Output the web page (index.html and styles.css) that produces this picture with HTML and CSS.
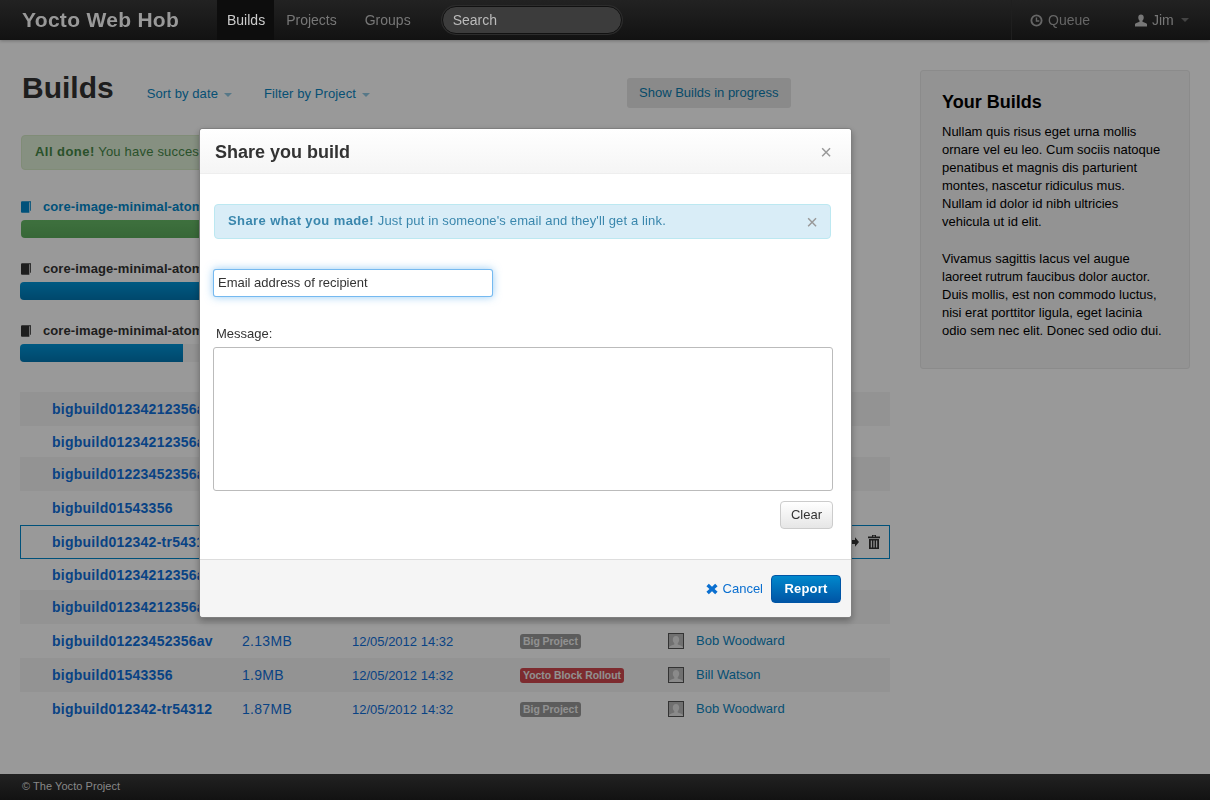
FILE: index.html
```html
<!DOCTYPE html>
<html lang="en">

<head>
    <meta charset="UTF-8">
    <title>Yocto Web Hob</title>
    <link rel="stylesheet" href="styles.css">
</head>

<body>
    <svg class="icon-defs" width="0" height="0">
        <symbol id="i-book" viewBox="0 0 12 14"><path d="M2.5 0H12v11.5h-1V1.2H3V0zM0 1.5C0 .7.7.2 1.5.2H10v13.8H1.6C.7 14 0 13.4 0 12.6z"/></symbol>
        <symbol id="i-user" viewBox="0 0 14 14"><path d="M7 0c2 0 3.2 1.5 3.2 3.6 0 1.6-.7 3-1.5 3.7v1.3c1.800.7 4.300 1.300 5.300 2.500V14H0v-2.900c1-1.200 3.500-1.800 5.300-2.500V7.300C4.500 6.600 3.800 5.200 3.800 3.600 3.800 1.500 5 0 7 0z"/></symbol>
        <symbol id="i-clock" viewBox="0 0 14 14"><path fill-rule="evenodd" d="M7 .5a6.500 6.500 0 1 1 0 13 6.500 6.500 0 0 1 0-13zm0 2a4.500 4.500 0 1 0 0 9 4.500 4.500 0 0 0 0-9zM6.200 3.800h1.500v3h2.300v1.500H6.200z"/></symbol>
        <symbol id="i-remove" viewBox="0 0 14 14"><path d="M3.300 1 7 4.500 10.700 1 13.500 3.800 10 7l3.500 3.300-2.800 2.700L7 9.500 3.300 13 .5 10.300 4 7 .5 3.800z"/></symbol>
        <symbol id="i-trash" viewBox="0 0 12 14"><path fill-rule="evenodd" d="M4 0h4v1.500h4v1.700H0V1.500h4zM5 .8v.7h2V.8zM1 4h10v10H1zm1.800 1.500v7h1.100v-7zm2.600 0v7h1.200v-7zm2.700 0v7h1.100v-7z"/></symbol>
        <symbol id="i-share" viewBox="0 0 10 12"><path d="M5 0l5 6-5 6V8.500H0v-5h5z"/></symbol>
    </svg>

    <!-- barra superior -->
    <header class="navbar">
        <a class="brand" href="#">Yocto Web Hob</a>
        <nav class="nav-links">
            <a class="nav-link active" href="#">Builds</a>
            <a class="nav-link" href="#">Projects</a>
            <a class="nav-link" href="#">Groups</a>
        </nav>
        <div class="nav-search">Search</div>
        <div class="nav-right">
            <a class="nav-item nav-queue" href="#"><svg class="ic14"><use href="#i-clock"/></svg>Queue</a>
            <a class="nav-item nav-user" href="#"><svg class="ic14"><use href="#i-user"/></svg>Jim<span class="caret"></span></a>
        </div>
    </header>

    <div class="page">
        <main class="content">
            <div class="page-head">
                <h1>Builds</h1>
                <a class="head-link sort-link" href="#">Sort by date<span class="caret"></span></a>
                <a class="head-link" href="#">Filter by Project<span class="caret"></span></a>
                <a class="btn-progress" href="#">Show Builds in progress</a>
            </div>

            <div class="alert-done"><strong>All done!</strong> You have successfully built your image.</div>

            <div class="progress-list">
                <div class="progress-item done">
                    <div class="progress-name"><svg class="ic-book"><use href="#i-book"/></svg>core-image-minimal-atom-1</div>
                    <div class="bar"><div class="fill fill-green"></div></div>
                </div>
                <div class="progress-item">
                    <div class="progress-name"><svg class="ic-book"><use href="#i-book"/></svg>core-image-minimal-atom-2</div>
                    <div class="bar"><div class="fill fill-long"></div></div>
                </div>
                <div class="progress-item">
                    <div class="progress-name"><svg class="ic-book"><use href="#i-book"/></svg>core-image-minimal-atom-3</div>
                    <div class="bar"><div class="fill fill-short"></div></div>
                </div>
            </div>

            <div class="builds">
                <div class="row stripe"><b>bigbuild01234212356av</b><span class="size">2.13MB</span><span class="date">12/05/2012 14:32</span><span><i class="tag">Big Project</i></span><span class="owner"><span class="avatar"><svg><use href="#i-user"/></svg></span>Bob Woodward</span></div>
                <div class="row short"><b>bigbuild01234212356av</b><span class="size">1.9MB</span><span class="date">12/05/2012 14:32</span><span><i class="tag">Big Project</i></span><span class="owner"><span class="avatar"><svg><use href="#i-user"/></svg></span>Bill Watson</span></div>
                <div class="row stripe"><b>bigbuild01223452356av</b><span class="size">1.87MB</span><span class="date">12/05/2012 14:32</span><span><i class="tag">Big Project</i></span><span class="owner"><span class="avatar"><svg><use href="#i-user"/></svg></span>Bob Woodward</span></div>
                <div class="row"><b>bigbuild01543356</b><span class="size">2.13MB</span><span class="date">12/05/2012 14:32</span><span><i class="tag">Big Project</i></span><span class="owner"><span class="avatar"><svg><use href="#i-user"/></svg></span>Bob Woodward</span></div>
                <div class="row selected"><b>bigbuild012342-tr54312</b><span class="size">1.9MB</span><span class="date">12/05/2012 14:32</span><span><i class="tag">Big Project</i></span><span class="owner"><span class="avatar"><svg><use href="#i-user"/></svg></span>Bill Watson</span><span class="actions"><svg class="ic-share"><use href="#i-share"/></svg><svg class="ic-trash"><use href="#i-trash"/></svg></span></div>
                <div class="row short"><b>bigbuild01234212356av</b><span class="size">1.87MB</span><span class="date">12/05/2012 14:32</span><span><i class="tag">Big Project</i></span><span class="owner"><span class="avatar"><svg><use href="#i-user"/></svg></span>Bob Woodward</span></div>
                <div class="row stripe"><b>bigbuild01234212356av</b><span class="size">2.13MB</span><span class="date">12/05/2012 14:32</span><span><i class="tag">Big Project</i></span><span class="owner"><span class="avatar"><svg><use href="#i-user"/></svg></span>Bill Watson</span></div>
                <div class="row"><b>bigbuild01223452356av</b><span class="size">2.13MB</span><span class="date">12/05/2012 14:32</span><span><i class="tag">Big Project</i></span><span class="owner"><span class="avatar"><svg><use href="#i-user"/></svg></span>Bob Woodward</span></div>
                <div class="row stripe"><b>bigbuild01543356</b><span class="size">1.9MB</span><span class="date">12/05/2012 14:32</span><span><i class="tag tag-red">Yocto Block Rollout</i></span><span class="owner"><span class="avatar"><svg><use href="#i-user"/></svg></span>Bill Watson</span></div>
                <div class="row"><b>bigbuild012342-tr54312</b><span class="size">1.87MB</span><span class="date">12/05/2012 14:32</span><span><i class="tag">Big Project</i></span><span class="owner"><span class="avatar"><svg><use href="#i-user"/></svg></span>Bob Woodward</span></div>
            </div>
        </main>

        <aside class="sidebar">
            <h3>Your Builds</h3>
            <p>Nullam quis risus eget urna mollis ornare vel eu leo. Cum sociis natoque penatibus et magnis dis parturient montes, nascetur ridiculus mus. Nullam id dolor id nibh ultricies vehicula ut id elit.</p>
            <p>Vivamus sagittis lacus vel augue laoreet rutrum faucibus dolor auctor. Duis mollis, est non commodo luctus, nisi erat porttitor ligula, eget lacinia odio sem nec elit. Donec sed odio dui.</p>
        </aside>
    </div>

    <footer class="footer">© The Yocto Project</footer>

    <!-- fundo escuro e janela modal -->
    <div class="backdrop"></div>
    <div class="modal">
        <div class="modal-header">
            <h3>Share you build</h3>
            <span class="close">×</span>
        </div>
        <div class="modal-body">
            <div class="alert-info"><span><strong>Share what you made!</strong> Just put in someone's email and they'll get a link.</span><span class="close">×</span></div>
            <input class="email" type="text" value="Email address of recipient">
            <label class="msg-label" for="message">Message:</label>
            <textarea id="message" class="message"></textarea>
            <div class="clear-row"><button class="btn-clear">Clear</button></div>
        </div>
        <div class="modal-footer">
            <a class="cancel" href="#"><svg><use href="#i-remove"/></svg>Cancel</a>
            <button class="btn-report">Report</button>
        </div>
    </div>
</body>

</html>
```

FILE: styles.css
```css
/* Base */
html, body {
    height: 100%;
}

body {
    margin: 0;
    height: 100vh;
    overflow: hidden;
    display: flex;
    flex-direction: column;
    font-family: "Liberation Sans", Arial, sans-serif;
    font-size: 13px;
    line-height: 18px;
    color: #333;
    background-color: #fff;
}

a {
    color: #0088cc;
    text-decoration: none;
}

.icon-defs {
    position: absolute;
}

svg {
    fill: currentColor;
}

.caret {
    display: inline-block;
    width: 0;
    height: 0;
    margin-left: 6px;
    vertical-align: middle;
    border-top: 4px solid currentColor;
    border-left: 4px solid transparent;
    border-right: 4px solid transparent;
    opacity: 0.45;
}

/* Barra superior */
.navbar {
    position: relative;
    z-index: 2;
    flex: none;
    height: 40px;
    display: flex;
    align-items: center;
    padding-left: 22px;
    background: linear-gradient(#222, #121212);
    box-shadow: 0 1px 3px rgba(0, 0, 0, 0.25);
}

.brand {
    width: 195px;
    font-size: 21px;
    letter-spacing: 0.3px;
    font-weight: bold;
    color: #999;
}

.nav-links {
    display: flex;
    align-self: stretch;
}

.nav-link {
    display: flex;
    align-items: center;
    padding: 0 10px;
    font-size: 14px;
    color: #777;
}

.nav-link + .nav-link {
    margin-left: 2px;
    margin-right: 6px;
}

.nav-link.active {
    padding-right: 9px;
    background-color: #0d0d0d;
    color: #ccc;
}

.nav-search {
    box-sizing: border-box;
    width: 180px;
    height: 28px;
    margin-left: 15px;
    padding: 4px 10px;
    font-size: 14px;
    line-height: 19px;
    color: #bbb;
    background-color: #3c3c3c;
    border: 1px solid #111;
    border-radius: 14px;
    box-shadow: 0 0 0 1px #2c2c2c;
}

.nav-right {
    display: flex;
    align-self: stretch;
    margin-left: auto;
    font-size: 14px;
}

.nav-item {
    display: flex;
    align-items: center;
    color: #666;
}

.nav-queue {
    width: 123px;
    padding-left: 18px;
    box-sizing: border-box;
    border-left: 1px solid #1f1f1f;
}

.nav-user {
    width: 76px;
    padding-left: 1px;
    box-sizing: border-box;
    color: #777;
}

.nav-user .ic14 {
    width: 12px;
}

.nav-user .caret {
    margin-left: 7px;
}

.ic14 {
    width: 13px;
    height: 13px;
    margin-right: 5px;
}

/* Colunas */
.page {
    flex: 1;
    display: flex;
    gap: 30px;
    padding: 30px 20px 0;
    min-height: 0;
}

.content {
    width: 870px;
    flex: none;
}

.page-head {
    display: flex;
    align-items: flex-start;
    height: 65px;
}

.page-head h1 {
    margin: 0 33px 0 2px;
    font-size: 30px;
    line-height: 36px;
    color: #333;
}

.head-link {
    margin-top: 15px;
    letter-spacing: 0.1px;
    color: #0a85c2;
}

.sort-link {
    margin-right: 32px;
}

.btn-progress {
    box-sizing: border-box;
    width: 164px;
    height: 30px;
    margin: 8px 99px 0 auto;
    padding: 6px 0 0 12px;
    border-radius: 3px;
    background-color: #e6e6e6;
    color: #0a7cb0;
}

/* Alertas */
.alert-done {
    box-sizing: border-box;
    width: 800px;
    height: 35px;
    margin-left: 1px;
    padding: 7px 13px;
    letter-spacing: 0.2px;
    background-color: #dff0d8;
    border: 1px solid #d6e9c6;
    border-radius: 4px;
    color: #468847;
}

.alert-done strong {
    letter-spacing: 0.45px;
}

/* Barras de progresso */
.progress-list {
    margin-top: 27px;
}

.progress-item {
    height: 62px;
}

.progress-name {
    display: flex;
    align-items: center;
    font-weight: bold;
    font-size: 13px;
    letter-spacing: 0.1px;
    height: 20px;
    margin-left: 1px;
    color: #333;
}

.done .progress-name {
    color: #0088cc;
}

.ic-book {
    width: 10px;
    height: 12px;
    margin-right: 12px;
}

.bar {
    width: 800px;
    height: 18px;
    margin-top: 3px;
    background-color: #f5f5f5;
    border-radius: 4px;
    overflow: hidden;
}

.done .bar {
    margin-left: 1px;
}

.fill {
    height: 100%;
    background: linear-gradient(#0095d9, #0078b4);
}

.fill-green {
    width: 100%;
    background: linear-gradient(#68bc68, #5cac5c);
}

.fill-long {
    width: 100%;
}

.fill-short {
    width: 163px;
}

/* Lista de builds */
.builds {
    margin-top: 9px;
}

.row {
    box-sizing: border-box;
    height: 34px;
    display: grid;
    grid-template-columns: 190px 110px 168px 148px 1fr auto;
    align-items: center;
    padding-left: 32px;
    color: #1070dc;
}

.row.short {
    height: 31px;
}

.row.stripe {
    background-color: #f5f5f5;
}

.row.selected {
    border: 1px solid #0088cc;
    padding-left: 31px;
}

.row b {
    font-size: 14px;
    letter-spacing: 0.25px;
}

.size {
    font-size: 14px;
    letter-spacing: 0.3px;
}

.date {
    font-size: 13px;
    padding-top: 2px;
}

.tag {
    display: inline-block;
    padding: 0 3px;
    font-size: 10.4px;
    line-height: 15px;
    font-weight: bold;
    font-style: normal;
    color: #f2f2f2;
    background-color: #999;
    border-radius: 3px;
}

.tag-red {
    background-color: #d0494f;
}

.owner {
    display: flex;
    align-items: center;
    color: #0a85c2;
}

.avatar {
    box-sizing: border-box;
    width: 16px;
    height: 16px;
    margin-right: 12px;
    padding-top: 2px;
    background-color: #bbb;
    border: 1px solid #555;
    color: #e6e6e6;
    overflow: hidden;
}

.avatar svg {
    display: block;
    width: 14px;
    height: 14px;
}

.actions {
    display: flex;
    align-items: center;
    gap: 9px;
    padding-right: 9px;
    color: #333;
}

.ic-share {
    width: 8px;
    height: 10px;
}

.ic-trash {
    width: 12px;
    height: 14px;
}

/* Painel lateral */
.sidebar {
    box-sizing: border-box;
    width: 270px;
    height: 299px;
    padding: 19px 21px;
    background-color: #f5f5f5;
    border: 1px solid #e8e8e8;
    border-radius: 3px;
    color: #000;
}

.sidebar h3 {
    margin: 0 0 9px;
    font-size: 18px;
    line-height: 24px;
}

.sidebar p {
    margin: 0 0 19px;
}

/* Rodapé */
.footer {
    position: relative;
    z-index: 2;
    flex: none;
    height: 26px;
    padding-left: 22px;
    font-size: 11px;
    letter-spacing: 0.05px;
    line-height: 25px;
    color: #888;
    background: linear-gradient(#222, #121212);
}

/* Modal */
.backdrop {
    position: fixed;
    inset: 0;
    z-index: 1;
    background-color: rgba(0, 0, 0, 0.4);
}

.modal {
    position: fixed;
    z-index: 3;
    left: 199px;
    top: 128px;
    width: 651px;
    background-color: #fff;
    border: 1px solid rgba(0, 0, 0, 0.5);
    border-radius: 4px;
    box-shadow: 0 3px 7px rgba(0, 0, 0, 0.3);
    overflow: hidden;
}

.modal-header {
    box-sizing: border-box;
    height: 45px;
    display: flex;
    align-items: center;
    justify-content: space-between;
    padding: 2px 19px 0 15px;
    background: linear-gradient(#fff, #f5f5f5);
    border-bottom: 1px solid #eee;
}

.modal-header h3 {
    margin: 0;
    font-size: 18px;
    color: #333;
}

.close {
    font-size: 20px;
    line-height: 18px;
    color: #999;
}

.modal-body {
    height: 385px;
    box-sizing: border-box;
    padding: 30px 18px 0 13px;
}

.alert-info {
    box-sizing: border-box;
    display: flex;
    justify-content: space-between;
    align-items: center;
    width: 617px;
    height: 35px;
    margin-left: 1px;
    padding: 0 12px 2px 13px;
    letter-spacing: 0.14px;
    background-color: #d9edf7;
    border: 1px solid #bce8f1;
    border-radius: 4px;
    color: #3a87ad;
}

.alert-info strong {
    letter-spacing: 0.4px;
}

.alert-info .close {
    padding-top: 2px;
}

.email {
    display: block;
    box-sizing: border-box;
    width: 280px;
    height: 28px;
    margin-top: 30px;
    padding: 3px 4px 5px;
    font: 13px "Liberation Sans", Arial, sans-serif;
    color: #333;
    border: 1px solid rgba(82, 168, 236, 0.8);
    border-radius: 3px;
    box-shadow: 0 0 8px rgba(82, 168, 236, 0.6);
    outline: none;
}

.msg-label {
    display: block;
    margin: 28px 0 4px 3px;
}

.message {
    display: block;
    box-sizing: border-box;
    width: 620px;
    height: 144px;
    border: 1px solid #bbb;
    border-radius: 3px;
    resize: none;
    outline: none;
}

.clear-row {
    display: flex;
    justify-content: flex-end;
    width: 620px;
    margin-top: 10px;
}

.btn-clear {
    box-sizing: border-box;
    width: 53px;
    height: 28px;
    padding: 0 0 2px;
    font: 13px "Liberation Sans", Arial, sans-serif;
    color: #333;
    background: linear-gradient(#fff, #e6e6e6);
    border: 1px solid #ccc;
    border-radius: 4px;
}

.modal-footer {
    box-sizing: border-box;
    height: 58px;
    display: flex;
    justify-content: flex-end;
    align-items: center;
    gap: 8px;
    padding-right: 10px;
    background-color: #f5f5f5;
    border-top: 1px solid #ddd;
}

.cancel {
    display: flex;
    align-items: center;
    color: #0a6fd0;
}

.cancel svg {
    width: 12px;
    height: 12px;
    margin-right: 5px;
}

.btn-report {
    box-sizing: border-box;
    width: 70px;
    height: 28px;
    padding: 0;
    font: bold 13px "Liberation Sans", Arial, sans-serif;
    letter-spacing: 0.2px;
    color: #fff;
    background: linear-gradient(#0088cc, #0055a5);
    border: 1px solid #0055a5;
    border-radius: 4px;
}
```
